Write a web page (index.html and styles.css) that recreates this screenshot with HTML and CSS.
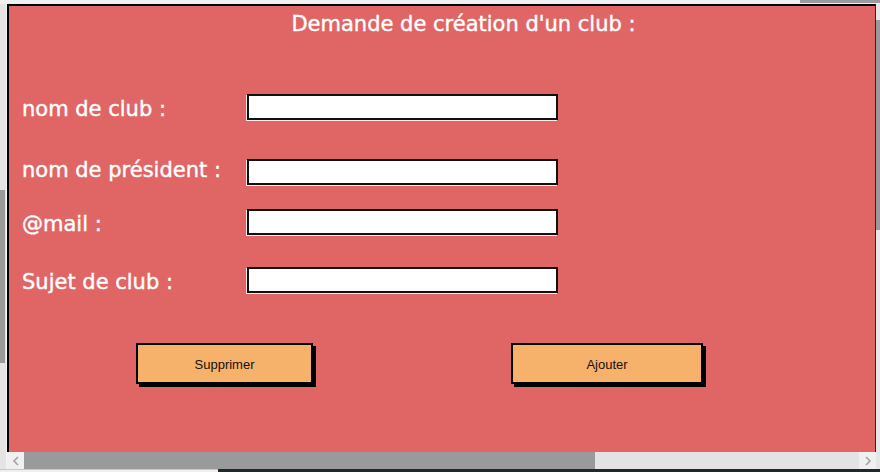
FILE: index.html
```html
<!DOCTYPE html>
<html lang="fr">
<head>
<meta charset="utf-8">
<title>Demande de création d'un club</title>
<link rel="stylesheet" href="styles.css">
</head>
<body>
<div class="top"><div class="top-thumb"></div></div>
<div class="mid">
  <div class="vrail"><div class="vthumb"></div></div>
  <div class="frame">
    <div class="canvas">
      <h1 class="title">Demande de création d'un club :</h1>
      <div class="form">
        <div class="row row-1"><span class="label">nom de club :</span><div class="input"></div></div>
        <div class="row row-2"><span class="label label-up">nom de président :</span><div class="input"></div></div>
        <div class="row row-3"><span class="label">@mail :</span><div class="input"></div></div>
        <div class="row row-4"><span class="label">Sujet de club :</span><div class="input"></div></div>
      </div>
      <div class="actions">
        <button class="btn btn-del">Supprimer</button>
        <button class="btn btn-add">Ajouter</button>
      </div>
    </div>
    <div class="hscroll">
      <div class="sbtn"><svg width="8" height="10" viewBox="0 0 8 10"><polyline points="6,1 2,5 6,9" fill="none" stroke="#a3a3a3" stroke-width="1.6"/></svg></div>
      <div class="hthumb"></div>
      <div class="htrack"></div>
      <div class="sbtn"><svg width="8" height="10" viewBox="0 0 8 10"><polyline points="2,1 6,5 2,9" fill="none" stroke="#a3a3a3" stroke-width="1.6"/></svg></div>
    </div>
  </div>
  <div class="rrail"><div class="rthumb"></div></div>
</div>
<div class="bottom"><div class="bottom-light"></div><div class="bottom-dark"></div></div>
</body>
</html>
```

FILE: styles.css
```css
html, body {
  margin: 0;
  padding: 0;
}
body {
  width: 880px;
  height: 472px;
  overflow: hidden;
  background: #f0f0f0;
  font-family: "DejaVu Sans", "Liberation Sans", sans-serif;
}
.top {
  height: 4px;
  display: flex;
  justify-content: flex-end;
  background: #f0f0f0;
}
.top-thumb {
  width: 80px;
  height: 3px;
  background: #9a9a9a;
}
.mid {
  height: 465px;
  display: flex;
}
.vrail {
  width: 7px;
  background: linear-gradient(to right, #e4e4e4 0 6px, #f4f4f4 6px);
}
.vthumb {
  width: 5px;
  height: 173px;
  margin-top: 186px;
  background: #9a9a9a;
}
.frame {
  flex: 1;
  display: flex;
  flex-direction: column;
}
.canvas {
  height: 448px;
  box-sizing: border-box;
  background: #e06666;
  border-top: 2px solid #000;
  border-left: 2px solid #000;
  border-right: 1px solid #4a1818;
}
.title {
  margin: 0;
  padding: 6px 0 0 43px;
  font-size: 21px;
  line-height: 24px;
  font-weight: normal;
  color: #fff;
  text-align: center;
  -webkit-text-stroke: 0.4px #fff;
}
.form {
  display: flex;
  flex-direction: column;
}
.row {
  display: flex;
  align-items: center;
  height: 26px;
}
.row-1 { margin-top: 58px; }
.row-2 { margin-top: 39px; }
.row-3 { margin-top: 24px; }
.row-4 { margin-top: 32px; }
.label {
  width: 238px;
  box-sizing: border-box;
  padding-left: 13px;
  padding-top: 4px;
  font-size: 21px;
  line-height: 26px;
  color: #fff;
  white-space: nowrap;
  -webkit-text-stroke: 0.4px #fff;
}
.label-up {
  margin-bottom: 8px;
}
.input {
  width: 311px;
  height: 26px;
  box-sizing: border-box;
  background: #fff;
  border: 2px solid #111;
  box-shadow: -1px 1px 0 rgba(255, 255, 255, 0.85);
}
.actions {
  display: flex;
  margin-top: 50px;
  padding-left: 127px;
  gap: 198px;
}
.btn {
  height: 41px;
  box-sizing: border-box;
  background: #f6b26b;
  border: 2px solid #000;
  box-shadow: 3px 3px 0 #000;
  font-family: "Liberation Sans", Arial, sans-serif;
  font-size: 13px;
  color: #111;
  padding: 1px 0 0;
}
.btn-del { width: 177px; }
.btn-add { width: 192px; }
.hscroll {
  height: 17px;
  display: flex;
}
.sbtn {
  width: 17px;
  background: #f0f0f0;
  display: flex;
  align-items: center;
  justify-content: center;
}
.hthumb {
  width: 571px;
  background: #9a9a9a;
}
.htrack {
  flex: 1;
  background: #e3e3e3;
}
.rrail {
  width: 4px;
  background: #e6e6e6;
}
.rthumb {
  height: 210px;
  margin-top: 16px;
  background: #9a9a9a;
}
.bottom {
  height: 3px;
  display: flex;
}
.bottom-light {
  width: 218px;
  background: #f0f0f0;
  border-top: 1px solid #c8c8c8;
  box-sizing: border-box;
}
.bottom-dark {
  flex: 1;
  background: #1c2a2e;
}
```
